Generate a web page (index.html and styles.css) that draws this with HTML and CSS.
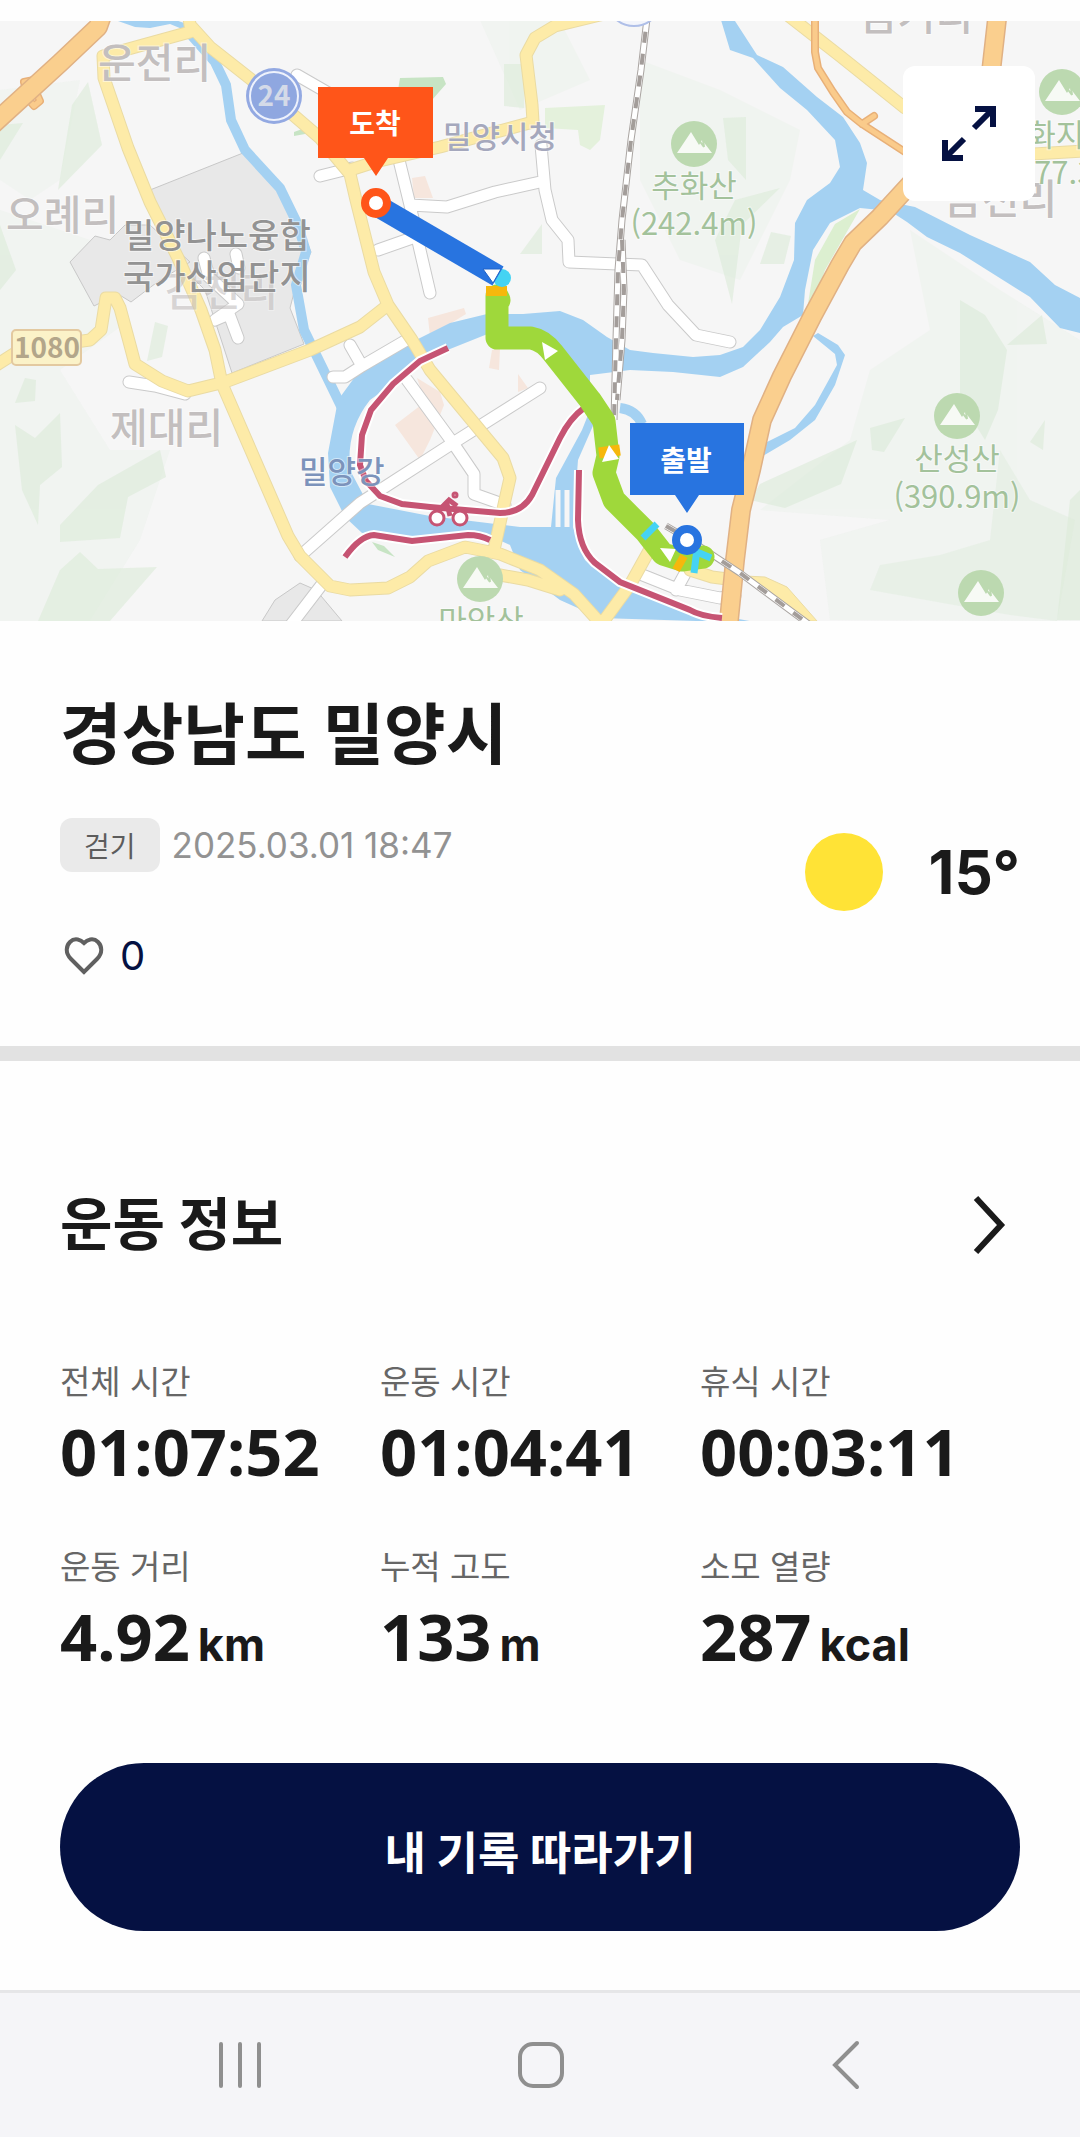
FILE: index.html
```html
<!DOCTYPE html>
<html lang="ko">
  <head>
    <meta charset="utf-8">
    <meta name="viewport" content="width=device-width, initial-scale=1">
    <title>경상남도 밀양시</title>
    <link rel="stylesheet" href="styles.css">
  </head>
  <body>
    <div class="map">
      <svg class="map-canvas" viewBox="0 21 1080 600" role="img" aria-label="밀양시 걷기 경로 지도">
        <defs>
          <g id="mountain">
            <circle r="23" fill="#bcd9b0"/>
            <path d="M-17 9 L-3 -12 L5 1 L8 -4 L18 9 Z" fill="#f7faf5"/>
            <path d="M4 -5 L10 3 L9 -4" fill="none" stroke="#bcd9b0" stroke-width="2"/>
          </g>
          <path id="highway" d="M104 10 L98 27 L60 63 L-10 127 M998 10 L991 72 L960 130 L902 193 L880 217 L853 243 L840 265 L813 315 L782 376 L762 420 L751 470 L741 510 L735 560 L728 630"/>
          <path id="ramp" d="M815 10 L815 52 L818 68 L833 92 L847 112 L862 124 L905 152 M862 124 L874 116 M27 95 L24 82 L34 80 M36 92 L40 101 L34 106 L28 99"/>
          <path id="yellow" d="M188 10 L190 25 L210 47 L262 88 L320 138 L350 174 L356 200 L364 232 L374 272 L388 305 L412 340 L430 370 L503 458 L510 478 L505 500 L494 550
            M190 32 L150 43 L103 56 L104 78 L128 148 L150 202 L178 258 L201 310 L215 350 L222 384 L288 536 L300 556 L330 586 L350 590 L388 588 L410 577 L428 561 L465 547 L500 554 L540 570 L574 594 L602 625
            M388 305 L360 327 L310 350 L225 382 L188 391 L162 381 L135 364 L130 345 L120 308 L115 298 L106 298 L101 330 L90 340 L75 342 L20 350 L-5 366
            M350 170 L375 162 L440 147 L533 122 L532 105 L526 55 L535 38 L555 26 L600 15
            M785 13 L840 56 L905 108 M1000 156 L1085 151
            M655 540 L630 585 L603 622 M500 575 L528 580 L560 590 M690 570 L712 577 L735 580"/>
          <path id="white" d="M297 75 L330 94 M320 176 L352 168 M399 160 L410 205 L420 250 L430 293 M410 205 L447 207 L495 192 L540 182
            M541 145 L545 190 L552 220 L568 240 L569 262 L642 265 L668 305 L696 335 L730 342
            M378 250 L415 237 M350 345 L362 366 L345 377 L333 377 M362 366 L410 338
            M407 380 L453 443 L474 474 L474 494 L505 505 M540 388 L453 443 L360 503 L300 556 M323 583 L287 630
            M640 574 L680 590 L720 598 L735 596 M687 570 L676 590 M229 314 L238 338 M204 258 L209 277 L238 304 L215 320 L229 314 M236 254 L239 268 M129 382 L155 386 L185 394"/>
          <path id="rail" d="M648 10 L641 70 L631 140 L622 220 L618 270 L616 340 L614 420 M622 240 L624 290 L622 340 L617 400 M666 526 L690 540 L740 573 L810 625"/>
          <path id="bike-road" d="M448 348 L420 361 L393 384 L371 410 L362 435 L360 465 L366 481 L380 496 L402 504 L430 507 L500 513 Q522 513 532 495 L560 438 Q570 418 584 408
            M345 557 Q360 536 374 535 L412 541 L468 535 Q480 535 490 540 M579 470 L578 520 Q579 548 595 563 L620 582 L690 610 Q700 616 722 618"/>
        </defs>

        <rect y="21" width="1080" height="600" fill="#f6f6f6"/>

        <!-- hills -->
        <g fill="#e5f0e3" opacity=".3">
          <path d="M0 90 L80 80 L60 180 L30 200 L0 180 Z M0 210 L90 240 L130 320 L60 370 L110 450 L170 450 L140 540 L90 621 L0 621 Z"/>
          <path d="M640 60 L720 90 L800 130 L790 180 L740 280 L680 260 L640 180 Z M480 20 L560 21 L590 80 L520 110 Z"/>
          <path d="M910 230 L1000 290 L1080 340 L1080 621 L830 620 L820 540 L890 520 L760 510 L850 440 L870 370 L930 330 Z"/>
        </g>
        <g fill="#dcebd9" opacity=".6">
          <path d="M88 82 L102 145 L58 190 L72 105 Z M0 125 L23 123 L0 160 Z M0 225 L16 270 L0 290 Z M155 322 L168 326 L162 357 L147 361 Z M25 378 L36 380 L35 401 L15 403 Z"/>
          <path d="M15 425 L35 438 L60 413 L62 467 L40 485 L38 525 L22 490 Z M160 450 L166 477 L128 497 L120 538 L60 542 L60 525 L98 485 Z M80 552 L98 569 L157 567 L110 621 L38 621 L60 570 Z"/>
          <path d="M504 64 L524 64 L524 108 L504 106 Z M542 224 L542 254 L520 254 Z M723 118 L746 117 L746 180 L728 160 Z M780 188 L742 225 L732 304 L715 240 L735 200 Z M771 232 L791 236 L784 264 L760 264 Z"/>
          <path d="M960 300 L985 315 L1007 350 L998 410 L985 440 L960 400 Z M1007 345 L1042 315 L1047 344 Z M857 440 L841 484 L785 508 L750 500 L760 484 Z M905 418 L884 452 L872 450 L870 428 Z M1045 420 L1043 450 L1030 442 Z"/>
          <path d="M1070 500 L1080 490 V620 H1057 Z"/>
        </g>
        <path d="M1000 450 L1030 500 L1075 520 L1057 621 L1010 615 L870 590 L880 565 L940 555 L990 540 Z M950 60" fill="#dcebd9" opacity=".4"/>
        <path d="M545 108 L605 105 L600 140 L590 150 L580 145 L578 130 L545 128 Z" fill="#e4f1dc"/>
        <path d="M400 78 L443 77 L446 84 L432 100 L398 90 Z M294 132 L305 128 V134 L294 136 Z M372 542 L384 546 L395 557 L378 550 Z" fill="#c7e4c4"/>
        <path d="M860 209 L835 224 L815 260 L807 310 L815 300 L825 270 Z" fill="#dcefd0"/>

        <!-- blocks -->
        <path d="M412 178 L425 176 L433 198 L414 198 Z M428 318 L464 308 L466 314 L430 336 Z" fill="#f6e6dd"/>
        <g fill="#e8e8e8" stroke="#c8c8c8" stroke-width="1">
          <path d="M150 190 L243 153 L275 180 L300 225 L311 252 L296 285 L290 308 L304 344 L232 373 L205 290 L175 260 Z"/>
          <path d="M125 225 L110 240 L95 236 L70 262 L94 306 L118 294 L131 302 L160 280 L190 262 L150 225 Z"/>
          <path d="M262 621 L275 600 L300 583 L316 590 L342 621 Z"/>
        </g>

        <!-- water -->
        <g fill="#a4d1f2">
          <path d="M718 10 L730 50 L753 58 L780 88 L807 110 L835 140 L840 167 L830 183 L807 200 L795 223 L794 260 L780 297 L760 330 L743 347 L720 355 L693 357 L653 353 L630 350 L607 337 L583 320 L560 311 L523 314 L487 314 L450 323 L410 343 L360 370 L338 400 L328 453 L330 487 L345 517 L362 533 L373 532 L410 540 L470 533 L490 536 L510 545 L520 570 L560 600 L600 618 L760 623 L680 608 L620 587 L585 560 L573 527 L575 500 L578 460 L592 428 L600 410 L590 390 L590 375 L630 370 L673 372 L720 377 L743 367 L770 342 L783 327 L803 315 L805 290 L813 250 L830 223 L860 208 L890 211 L907 222 L927 237 L960 253 L1030 297 L1060 328 L1080 333 L1080 298 L1055 285 L1030 262 L970 235 L915 207 L880 200 L863 190 L867 163 L860 143 L843 117 L817 97 L783 67 L757 55 L735 21 L732 10 Z"/>
          <path d="M118 21 L135 27 L150 28 L170 24 L187 31 L184 23 L170 18 Z M765 443 L795 428 L815 405 L837 365 L835 354 L813 336 L818 333 L838 345 L845 355 L835 385 L815 420 L790 440 L761 457 Z"/>
        </g>
        <path d="M192 36 L215 62 L226 85 L231 120 L245 150 L280 188 L298 225 L306 252 L296 285 L304 330 L342 408" fill="none" stroke="#a4d1f2" stroke-width="10"/>
        <path d="M620 408 Q636 410 642 424" fill="none" stroke="#a4d1f2" stroke-width="10"/>
        <path d="M490 333 L430 357 L370 400 Q346 430 350 470 L368 504 L430 516 L520 527 L551 527 L556 478 L582 430 L590 410 L540 345 Z" fill="#f6f6f6"/>
        <path d="M395 425 L425 402 L417 378 L440 392 L444 405 L430 440 L420 460 Z M492 350 L500 348 L499 370 L489 368 Z M518 374 L528 388 L518 392 Z" fill="#f6e6dd"/>
        <path d="M558 527 V490 M567 527 V490" stroke="#f6f6f6" stroke-width="5"/>

        <!-- roads: casing first, then fill -->
        <g fill="none" stroke-linejoin="round" stroke-linecap="round">
          <use href="#white" stroke="#cacaca" stroke-width="13"/>
          <use href="#white" stroke="#fff" stroke-width="11"/>
          <use href="#yellow" stroke="#eadba3" stroke-width="13"/>
          <use href="#yellow" stroke="#fdeba8" stroke-width="11"/>
          <path d="M745 576 L765 577 L787 587 L817 621 L802 621 L780 600 Z" fill="#fdeba8" stroke="#eadba3"/>
          <use href="#ramp" stroke="#e8b078" stroke-width="8"/>
          <use href="#ramp" stroke="#facb8b" stroke-width="5"/>
          <use href="#highway" stroke="#e0b184" stroke-width="20"/>
          <use href="#highway" stroke="#facf8e" stroke-width="17"/>
        </g>
        <g fill="none">
          <use href="#rail" stroke="#aaa5a2" stroke-width="7"/>
          <use href="#rail" stroke="#fff" stroke-width="5"/>
          <use href="#rail" stroke="#a39d9a" stroke-width="4" stroke-dasharray="11 11"/>
          <use href="#bike-road" stroke="#fff" stroke-width="10"/>
          <use href="#bike-road" stroke="#c65473" stroke-width="6"/>
        </g>
        <g fill="#fff" stroke="#c65473" stroke-width="3">
          <circle cx="437" cy="518" r="7"/>
          <circle cx="460" cy="518" r="7"/>
          <path d="M442 507 L449 500 L457 506 M447 504 L450 516" fill="none" stroke-width="5"/>
          <circle cx="455" cy="495" r="2"/>
        </g>

        <!-- place names -->
        <g class="label label-village">
          <text x="98" y="78">운전리</text>
          <text x="6" y="230">오례리</text>
          <text x="165" y="306" opacity=".6">감천리</text>
          <text x="110" y="443">제대리</text>
          <text x="944" y="214">금천리</text>
          <text x="860" y="30">금거리</text>
        </g>
        <g class="label label-complex">
          <text x="123" y="248">밀양나노융합</text>
          <text x="123" y="289">국가산업단지</text>
        </g>
        <text class="label label-office" x="443" y="148">밀양시청</text>
        <text class="label label-river" x="299" y="483">밀양강</text>
        <g class="label label-mountain">
          <text x="694" y="197">추화산</text>
          <text x="694" y="235">(242.4m)</text>
          <text x="957" y="470">산성산</text>
          <text x="957" y="508">(390.9m)</text>
          <text x="1070" y="146">화지산</text>
          <text x="1070" y="184">(177.3m)</text>
          <text x="481" y="632">마안산</text>
        </g>
        <use href="#mountain" x="694" y="144"/>
        <use href="#mountain" x="957" y="416"/>
        <use href="#mountain" x="480" y="579"/>
        <use href="#mountain" x="981" y="593"/>
        <use href="#mountain" x="1062" y="92"/>

        <!-- road numbers -->
        <circle cx="274" cy="96" r="28" fill="#93a9e2"/>
        <circle cx="274" cy="96" r="24" fill="#8fa7e0" stroke="#eef2fc" stroke-width="2"/>
        <text class="road-number" x="274" y="106" fill="#d4dae8">24</text>
        <circle cx="634" cy="-2" r="28" fill="#f3f5fb" stroke="#afbfe8" stroke-width="2"/>
        <rect x="12" y="330" width="69" height="35" rx="4" fill="#fbf2c8" stroke="#e3c9a0" stroke-width="2"/>
        <text class="road-number" x="47" y="358" fill="#b3a68a">1080</text>

        <!-- walked route -->
        <g fill="none" stroke-linejoin="round">
          <path d="M499 300 L497 296 L497 338 L531 338 Q543 340 553 353 L590 400 L604 421 L608 456 L604 473 L614 500 L645 531 L663 554 L682 560 L703 557" stroke="#9fd83b" stroke-width="23" stroke-linecap="round"/>
          <path d="M599 453 L620 450" stroke="#f6b80c" stroke-width="11"/>
          <path d="M643 538 L657 524 M694 573 L697 549 M697 552 L711 558" stroke="#45d3f3" stroke-width="7"/>
          <path d="M676 570 L684 556" stroke="#f6b80c" stroke-width="8"/>
          <path d="M486 291 L507 291" stroke="#f6b80c" stroke-width="10"/>
          <circle cx="502" cy="278" r="9" fill="#45d3f3"/>
          <path d="M376 205 L498 276" stroke="#2874e0" stroke-width="22"/>
          <path d="M483 269 L501 269 L493 283 Z" fill="#fff" stroke="#1f62c8" stroke-width="1"/>
          <path d="M542 342 L558 351 L545 360 Z M602 462 L609 445 L619 459 Z M660 548 L676 549 L670 562 Z" fill="#fff"/>
        </g>

        <g fill="#ff5519">
          <path d="M318 87 H433 V158 H388 L376 176 L364 158 H318 Z"/>
          <circle cx="376" cy="203" r="11" fill="#fff" stroke="#ff5519" stroke-width="8"/>
        </g>
        <text class="pin-text" x="375" y="134">도착</text>
        <g fill="#2874e0">
          <path d="M630 423 H744 V495 H699 L687 513 L675 495 H630 Z"/>
          <circle cx="687" cy="540" r="11" fill="#fff" stroke="#2874e0" stroke-width="8"/>
        </g>
        <text class="pin-text" x="686" y="471">출발</text>
      </svg>
      <button class="expand" type="button" aria-label="지도 크게 보기">
        <svg viewBox="0 0 60 60" aria-hidden="true">
          <path d="M36 5 H54 V23 M54 5 L35 24 M6 36 V54 H24 M6 54 L25 35" fill="none" stroke="#051142" stroke-width="6"/>
        </svg>
      </button>
    </div>

    <section class="summary">
      <h1>경상남도 밀양시</h1>
      <div class="summary-row">
        <div class="summary-left">
          <div class="meta">
            <span class="chip">걷기</span>
            <time datetime="2025-03-01T18:47">2025.03.01 18:47</time>
          </div>
          <button class="like" type="button" aria-label="좋아요">
            <svg viewBox="0 0 44 40" aria-hidden="true">
              <path d="M22 36 L9 23 C3 17 4 10 8 6 C13 1 19 4 22 7 C25 4 31 1 36 6 C40 10 41 17 35 23 Z" fill="none" stroke="#606060" stroke-width="4"/>
            </svg>
            <span>0</span>
          </button>
        </div>
        <div class="weather">
          <span class="sun"></span>
          <strong>15°</strong>
        </div>
      </div>
    </section>

    <section class="workout">
      <header class="workout-header">
        <h2>운동 정보</h2>
        <a href="#workout-detail" aria-label="운동 정보 자세히 보기">
          <svg viewBox="0 0 60 60" aria-hidden="true">
            <path d="M16 3 L41 30 L16 57" fill="none" stroke="#1a1a1a" stroke-width="6"/>
          </svg>
        </a>
      </header>
      <dl class="stats" id="workout-detail">
        <div>
          <dt>전체 시간</dt>
          <dd>01:07:52</dd>
        </div>
        <div>
          <dt>운동 시간</dt>
          <dd>01:04:41</dd>
        </div>
        <div>
          <dt>휴식 시간</dt>
          <dd>00:03:11</dd>
        </div>
        <div>
          <dt>운동 거리</dt>
          <dd>4.92<span class="unit">km</span></dd>
        </div>
        <div>
          <dt>누적 고도</dt>
          <dd>133<span class="unit">m</span></dd>
        </div>
        <div>
          <dt>소모 열량</dt>
          <dd>287<span class="unit">kcal</span></dd>
        </div>
      </dl>
      <button class="follow" type="button">내 기록 따라가기</button>
    </section>

    <nav class="system-bar">
      <button type="button" aria-label="최근 앱">
        <svg viewBox="0 0 60 60"><path d="M11 9 V51 M30 9 V51 M49 9 V51"/></svg>
      </button>
      <button type="button" aria-label="홈">
        <svg viewBox="0 0 60 60"><rect x="10" y="9" width="42" height="42" rx="13"/></svg>
      </button>
      <button type="button" aria-label="뒤로">
        <svg viewBox="0 0 60 60"><path d="M47 8 L25 30 L47 52"/></svg>
      </button>
    </nav>
  </body>
</html>
```
FILE: styles.css
```css
* {
  box-sizing: border-box;
}
body {
  margin: 0;
  padding-top: 21px;
  min-height: 100vh;
  display: flex;
  flex-direction: column;
  background-color: #fefefe;
  color: #1a1a1a;
  font-family: Inter, "Noto Sans CJK KR", sans-serif;
}
h1, h2, dl, dd {
  margin: 0;
}
button {
  padding: 0;
  border: 0;
  background: none;
  font-family: inherit;
  cursor: pointer;
}
svg {
  display: block;
}

/* map */
.map {
  position: relative;
}
.map-canvas {
  width: 100%;
  height: auto;
}
.label {
  font-family: "Noto Sans CJK KR", sans-serif;
  font-weight: 500;
  paint-order: stroke;
  stroke: rgba(255, 255, 255, 0.5);
  stroke-width: 2px;
}
.label-village {
  font-size: 41px;
  fill: #c3bfbf;
}
.label-complex {
  font-size: 34px;
  fill: #939393;
}
.label-office {
  font-size: 31px;
  fill: #a5a8bd;
}
.label-river {
  font-size: 31px;
  fill: #7c93bb;
}
.label-mountain {
  font-size: 31px;
  font-weight: 400;
  fill: #a3c29b;
  text-anchor: middle;
}
.road-number {
  font-family: "Noto Sans CJK KR", sans-serif;
  font-size: 28px;
  font-weight: 700;
  text-anchor: middle;
}
.pin-text {
  font-family: "Noto Sans CJK KR", sans-serif;
  font-size: 28px;
  font-weight: 700;
  fill: #fff;
  text-anchor: middle;
}
.expand {
  position: absolute;
  top: 45px;
  right: 45px;
  width: 132px;
  height: 135px;
  display: flex;
  align-items: center;
  justify-content: center;
  background-color: #fff;
  border-radius: 12px;
}
.expand svg {
  width: 60px;
  height: 60px;
}

/* title, date, weather */
.summary {
  padding: 74px 60px 70px;
  border-bottom: 15px solid #e2e2e2;
}
.summary h1 {
  font-size: 67px;
  line-height: 80px;
  font-weight: 700;
}
.summary-row {
  display: flex;
  justify-content: space-between;
  margin-top: 43px;
}
.summary-left {
  display: flex;
  flex-direction: column;
  align-items: flex-start;
  gap: 64px;
}
.meta {
  display: flex;
  align-items: center;
  gap: 12px;
}
.chip {
  height: 54px;
  padding: 0 24px;
  border-radius: 12px;
  background-color: #eaeaea;
  color: #5c5c5c;
  font-size: 28px;
  line-height: 58px;
}
.meta time {
  color: #929292;
  font-size: 35px;
  line-height: 54px;
}
.like {
  display: flex;
  align-items: center;
  gap: 12px;
  color: #051142;
  font-size: 40px;
  line-height: 40px;
}
.like svg {
  width: 48px;
  height: 40px;
}
.weather {
  display: flex;
  align-items: center;
  align-self: flex-start;
  gap: 46px;
  padding-top: 15px;
}
.sun {
  width: 78px;
  height: 78px;
  border-radius: 50%;
  background-color: #ffe336;
}
.weather strong {
  font-size: 60px;
  line-height: 72px;
  font-weight: 700;
}

/* workout numbers */
.workout {
  padding: 128px 60px 59px;
}
.workout-header {
  display: flex;
  align-items: center;
  justify-content: space-between;
}
.workout-header h2 {
  font-size: 57px;
  line-height: 72px;
  font-weight: 700;
}
.workout-header svg {
  width: 60px;
  height: 60px;
}
.stats {
  display: grid;
  grid-template-columns: repeat(3, 1fr);
  row-gap: 60px;
  margin-top: 101px;
}
.stats dt {
  color: #666;
  font-size: 33px;
  line-height: 40px;
}
.stats dd {
  margin-top: 13px;
  font-family: "Noto Sans", sans-serif;
  font-size: 65px;
  line-height: 72px;
  font-weight: 700;
}
.stats .unit {
  margin-left: 8px;
  font-family: Inter, sans-serif;
  font-size: 45px;
  line-height: 45px;
  font-weight: 700;
}
.follow {
  width: 100%;
  height: 168px;
  margin-top: 91px;
  padding-top: 6px;
  border-radius: 84px;
  background-color: #051142;
  color: #fff;
  font-size: 45px;
  font-weight: 700;
}

/* bottom bar */
.system-bar {
  flex: 1;
  display: grid;
  grid-template-columns: repeat(3, 1fr);
  align-items: center;
  padding: 0 90px;
  border-top: 3px solid #e6e6e8;
  background-color: #f5f5f8;
}
.system-bar button {
  display: flex;
  justify-content: center;
  padding: 40px 0;
}
.system-bar svg {
  width: 60px;
  height: 60px;
  fill: none;
  stroke: #8f8f8f;
  stroke-width: 4;
  stroke-linecap: round;
}
```
